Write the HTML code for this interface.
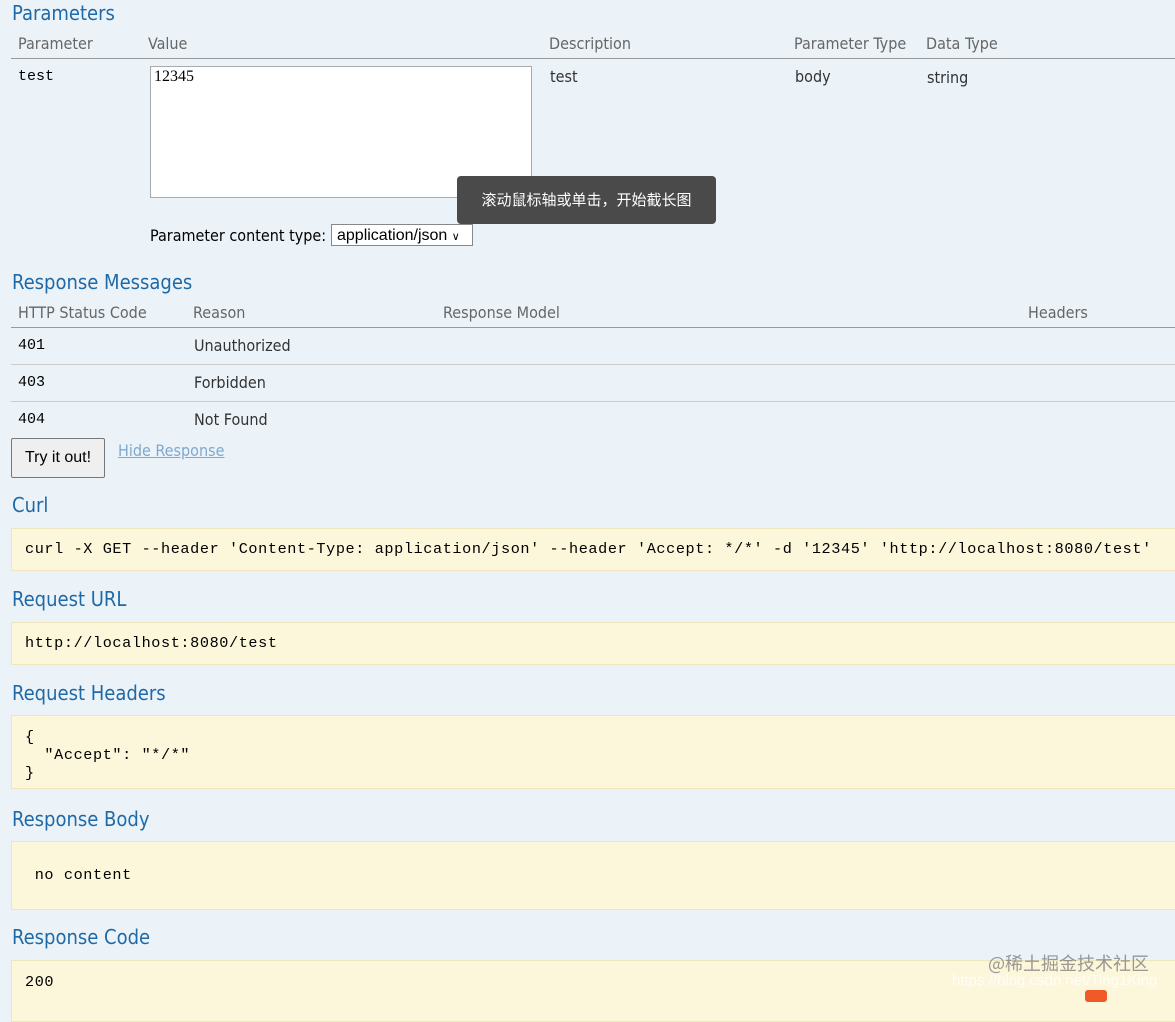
<!DOCTYPE html>
<html><head><meta charset="utf-8"><style>
body{margin:0;width:1175px;height:999px;background:#ebf3f9;overflow:hidden;position:relative;font-family:"DejaVu Sans Condensed","Liberation Sans",sans-serif;color:#333}
.a{position:absolute;white-space:nowrap}
h2{position:absolute;margin:0;font-weight:normal;font-size:20px;color:#1f69a6;left:12px;font-family:"DejaVu Sans Condensed","Liberation Sans",sans-serif}
.th{color:#666;font-size:16px}
.td{font-size:16px;color:#333}
.m{font-family:"Liberation Mono",monospace;font-size:15px;color:#000}
.line{position:absolute;left:11px;right:0;height:1px;background:#999}
.sl{position:absolute;left:11px;right:0;height:1px;background:#ccc}
.code{position:absolute;left:11px;right:-5px;background:#fcf6db;border:1px solid #efe6bf;font-family:"Liberation Mono",monospace;font-size:15.2px;color:#000;letter-spacing:0.6px;white-space:pre}
</style></head><body>
<h2 style="top:1px">Parameters</h2>
<div class="a th" style="left:18px;top:34px">Parameter</div>
<div class="a th" style="left:148px;top:34px">Value</div>
<div class="a th" style="left:549px;top:34px">Description</div>
<div class="a th" style="left:794px;top:34px">Parameter Type</div>
<div class="a th" style="left:926px;top:34px">Data Type</div>
<div class="line" style="top:58px"></div>
<div class="a m" style="left:18px;top:68px">test</div>
<div class="a" style="left:150px;top:66px;width:380px;height:130px;background:#fff;border:1px solid #aaa"></div>
<div class="a" style="left:154px;top:68px;font-family:'Liberation Serif',serif;font-size:16px;color:#000">12345</div>
<div class="a td" style="left:550px;top:67px">test</div>
<div class="a td" style="left:795px;top:67px">body</div>
<div class="a td" style="left:927px;top:68px">string</div>
<div class="a" style="left:150px;top:226px;font-size:16px;color:#000">Parameter content type:</div>
<div class="a" style="left:331px;top:224px;width:142px;height:22px;background:#fff;border:1px solid #888;font-family:'Liberation Sans',sans-serif;font-size:16px;color:#000;line-height:22px;padding-left:5px;box-sizing:border-box">application/json <span style="font-size:11px">&#x2228;</span></div>
<div class="a" style="left:457px;top:176px;width:259px;height:48px;background:#4a4a4a;border-radius:4px;color:#fff;font-family:'Noto Sans CJK SC',sans-serif;font-size:15px;line-height:48px;text-align:center">滚动鼠标轴或单击，开始截长图</div>
<h2 style="top:270px">Response Messages</h2>
<div class="a th" style="left:18px;top:303px">HTTP Status Code</div>
<div class="a th" style="left:193px;top:303px">Reason</div>
<div class="a th" style="left:443px;top:303px">Response Model</div>
<div class="a th" style="left:1028px;top:303px">Headers</div>
<div class="line" style="top:327px"></div>
<div class="a m" style="left:18px;top:337px">401</div>
<div class="a td" style="left:194px;top:336px">Unauthorized</div>
<div class="sl" style="top:364px"></div>
<div class="a m" style="left:18px;top:374px">403</div>
<div class="a td" style="left:194px;top:373px">Forbidden</div>
<div class="sl" style="top:401px"></div>
<div class="a m" style="left:18px;top:411px">404</div>
<div class="a td" style="left:194px;top:410px">Not Found</div>
<div class="a" style="left:11px;top:438px;width:92px;height:38px;background:#efefef;border:1px solid #777;border-radius:2px;font-family:'Liberation Sans',sans-serif;font-size:16px;color:#000;line-height:38px;text-align:center">Try it out!</div>
<div class="a" style="left:118px;top:441px;font-size:16px;color:#7fa8d0;text-decoration:underline">Hide Response</div>
<h2 style="top:493px">Curl</h2>
<div class="code" style="top:528px;height:41px;line-height:41px;padding-left:13px">curl -X GET --header 'Content-Type: application/json' --header 'Accept: */*' -d '12345' 'http://localhost:8080/test'</div>
<h2 style="top:587px">Request URL</h2>
<div class="code" style="top:622px;height:41px;line-height:41px;padding-left:13px">http://localhost:8080/test</div>
<h2 style="top:681px">Request Headers</h2>
<div class="code" style="top:715px;height:74px;line-height:18px;padding:12px 0 0 13px;box-sizing:border-box">{
  "Accept": "*/*"
}</div>
<h2 style="top:807px">Response Body</h2>
<div class="code" style="top:841px;height:67px;line-height:67px;padding-left:13px"> no content</div>
<h2 style="top:925px">Response Code</h2>
<div class="code" style="top:960px;height:60px;line-height:42px;padding-left:13px">200</div>
<div class="a" style="left:988px;top:950px;font-family:'Noto Sans CJK SC',sans-serif;font-size:18px;color:rgba(120,120,120,.75)">@稀土掘金技术社区</div>
<div class="a" style="left:952px;top:972px;font-family:'Liberation Sans',sans-serif;font-size:15px;color:rgba(255,255,255,.8)">https://blog.csdn.net/Ting1King</div>
<div class="a" style="left:1085px;top:990px;width:22px;height:12px;background:#f05a28;border-radius:3px"></div>
</body></html>
